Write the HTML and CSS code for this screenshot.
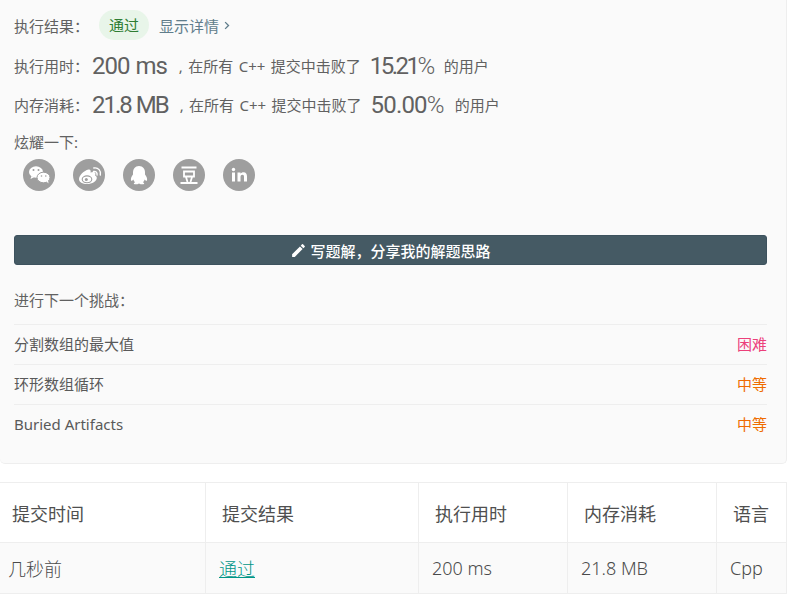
FILE: index.html
```html
<!DOCTYPE html>
<html lang="zh">
<head>
<meta charset="utf-8">
<title>提交结果</title>
<link rel="stylesheet" href="styles.css">
</head>
<body>
<section class="card">
  <div class="row result-row">
    <span class="label">执行结果：</span>
    <span class="pill">通过</span>
    <a class="details">显示详情<svg class="chev" viewBox="0 0 8 12" width="6" height="9"><path d="M1.500 1.500 6 6l-4.500 4.500" fill="none" stroke="currentColor" stroke-width="1.800"/></svg></a>
  </div>
  <div class="row stat-row">
    <span class="label">执行用时：</span><span class="big">200 ms</span>
    <span class="note note-a">, 在所有 C++ 提交中击败了</span>
    <span class="big pct pct-tight">15.21<span class="thin">%</span></span>
    <span class="note tail">的用户</span>
  </div>
  <div class="row stat-row">
    <span class="label">内存消耗：</span><span class="big big-tight">21.8 MB</span>
    <span class="note note-a">, 在所有 C++ 提交中击败了</span>
    <span class="big pct">50.00<span class="thin">%</span></span>
    <span class="note tail">的用户</span>
  </div>
  <div class="share-title">炫耀一下:</div>
  <div class="share">
    <span class="circle"><svg viewBox="0 0 32 32" width="32" height="32"><ellipse cx="13" cy="13" rx="7" ry="5.800" fill="#fff"/><path d="M8.500 17l-1 3 3.500-1.800z" fill="#fff"/><ellipse cx="20.500" cy="18.500" rx="6.500" ry="5.300" fill="#fff" stroke="#9e9e9e" stroke-width="1"/><path d="M23.500 22.500l2 2-.5-3.500z" fill="#fff"/><circle cx="10.500" cy="11" r="1" fill="#9e9e9e"/><circle cx="15.500" cy="11" r="1" fill="#9e9e9e"/><circle cx="18.500" cy="17" r=".8" fill="#9e9e9e"/><circle cx="22.800" cy="17" r=".8" fill="#9e9e9e"/></svg></span>
    <span class="circle"><svg viewBox="0 0 32 32" width="32" height="32"><path d="M6 20c0-3.500 5-8.500 9.500-9.500 2-.4 2.500 1.200 2 3 2.500-1 5-.8 5 1.300 0 .8-.4 1.200-.4 1.600 1 .4 1.700 1.200 1.700 2.500 0 3-4.500 6.100-9.800 6.100C9.500 25 6 23.500 6 20z" fill="#fff"/><ellipse cx="14" cy="20.300" rx="4.800" ry="3.400" fill="none" stroke="#9e9e9e" stroke-width="1.100"/><circle cx="13.300" cy="20.500" r="1.500" fill="#9e9e9e"/><path d="M20.500 12.500c2.500-.5 4 1.300 3.500 3.500M20.800 9c4.500-.8 7.500 2.800 6.500 7" fill="none" stroke="#fff" stroke-width="1.400" stroke-linecap="round"/></svg></span>
    <span class="circle"><svg viewBox="0 0 32 32" width="32" height="32"><path d="M16 7c-4 0-6 3-6 6.500v2c-1.500 2-2.500 4-2 6 .5.800 1.500 0 2.300-1 .3 1.200 1 2 1.700 2.700-1 .5-1.500 1.300-1 1.800 1 .6 3.500.5 5-.5 1.500 1 4 1.100 5 .5.500-.5 0-1.300-1-1.800.7-.7 1.400-1.500 1.700-2.700.8 1 1.800 1.800 2.300 1 .5-2-.5-4-2-6v-2C22 10 20 7 16 7z" fill="#fff"/></svg></span>
    <span class="circle"><svg viewBox="0 0 32 32" width="32" height="32"><path d="M8.500 8.500h15M11 12.500h10v5H11zM13 18l1.500 5M19 18l-1.500 5M7.500 24h17" fill="none" stroke="#fff" stroke-width="1.800"/></svg></span>
    <span class="circle"><svg viewBox="0 0 32 32" width="32" height="32"><rect x="9" y="13.500" width="3" height="9" fill="#fff"/><circle cx="10.500" cy="10.500" r="1.700" fill="#fff"/><path d="M14.500 13.500h3v1.300c.7-1 1.800-1.500 3-1.500 2.500 0 3.500 1.600 3.500 4.200v5h-3v-4.600c0-1.300-.4-2.100-1.500-2.100-1.200 0-2 .8-2 2.200v4.500h-3z" fill="#fff"/></svg></span>
  </div>
  <button class="solve"><svg viewBox="0 0 24 24" width="17" height="17"><path d="M3 17.250V21h3.750L17.810 9.940l-3.750-3.750L3 17.250zM20.710 7.040a1 1 0 0 0 0-1.410l-2.340-2.340a1 1 0 0 0-1.410 0l-1.830 1.830 3.750 3.750 1.830-1.830z" fill="#fff"/></svg>写题解，分享我的解题思路</button>
  <div class="next-title">进行下一个挑战：</div>
  <ul class="next">
    <li><span>分割数组的最大值</span><span class="hard">困难</span></li>
    <li><span>环形数组循环</span><span class="medium">中等</span></li>
    <li><span>Buried Artifacts</span><span class="medium">中等</span></li>
  </ul>
</section>
<table class="subs">
  <colgroup><col class="c1"><col class="c2"><col class="c3"><col class="c4"><col class="c5"></colgroup>
  <thead><tr><th>提交时间</th><th>提交结果</th><th>执行用时</th><th>内存消耗</th><th>语言</th></tr></thead>
  <tbody><tr><td>几秒前</td><td><a class="ok">通过</a></td><td>200 ms</td><td>21.8 MB</td><td>Cpp</td></tr></tbody>
</table>
</body>
</html>
```
FILE: styles.css
```css
* { box-sizing: border-box; }
html, body { margin: 0; padding: 0; background: #fff; }
body {
  font-family: "Noto Sans", "Noto Sans CJK SC", sans-serif;
  color: #616161;
  font-size: 15px;
  height: 605px;
  overflow: hidden;
}
.card {
  width: 787px;
  height: 464px;
  padding: 10px 20px 0 14px;
  background: #fafafa;
  border: solid #eeeeee;
  border-width: 0 1px 1px 0;
  border-radius: 0 0 5px 5px;
}
.row { display: flex; align-items: center; }
.result-row { height: 30px; }
.stat-row { height: 39px; }
.stat-row:nth-child(2) { margin-top: 6px; }
.label { font-size: 15px; white-space: pre; }
.result-row .label { width: 85px; }
.stat-row .label { width: 78px; }
.pill {
  width: 50px;
  height: 30px;
  line-height: 30px;
  border-radius: 15px;
  background: #e8f5e9;
  color: #2e7d32;
  font-size: 15px;
  text-align: center;
}
.details { margin-left: 10px; color: #607d8b; font-size: 15px; display: flex; align-items: center; gap: 5px; }
.big { font-family: Roboto, sans-serif; font-size: 24px; font-weight: 400; color: #616161; letter-spacing: -1px; word-spacing: 1px; white-space: pre; }
.big-tight { letter-spacing: -2px; }
.thin { font-weight: 300; }
.note { font-size: 15px; white-space: pre; word-spacing: 1.500px; }
.note-a { margin-left: 12px; }
.pct { margin-left: 9px; letter-spacing: -.8px; }
.pct-tight { letter-spacing: -2.500px; }
.tail { margin-left: 11px; }
.share-title { margin-top: 8px; font-size: 15px; line-height: 20px; }
.share { display: flex; gap: 18px; margin: 7px 0 0 9px; }
.circle { width: 32px; height: 32px; border-radius: 50%; background: #9e9e9e; display: block; }
.circle svg { display: block; }
.solve {
  display: flex;
  align-items: center;
  justify-content: center;
  gap: 3px;
  width: 753px;
  height: 30px;
  margin-top: 44px;
  padding: 0;
  border: 1px solid #3d525e;
  border-radius: 3px;
  background: #455a64;
  color: #fff;
  font: 500 15px "Noto Sans", "Noto Sans CJK SC", sans-serif;
}
.next-title { margin-top: 25px; height: 34px; font-size: 15px; line-height: 20px; }
.next { list-style: none; margin: 0; padding: 0; width: 753px; }
.next li {
  display: flex;
  justify-content: space-between;
  align-items: center;
  height: 40px;
  padding-bottom: 2px;
  border-top: 1px solid #eeeeee;
  font-size: 15px;
  color: #595959;
}
.hard { color: #ec407a; }
.medium { color: #ef6c00; }
.subs {
  table-layout: fixed;
  width: 786px;
  margin-top: 18px;
  border-collapse: collapse;
  color: #4f4f4f;
  font-size: 18px;
}
.c1 { width: 205.500px; }
.c2 { width: 213px; }
.c3 { width: 149px; }
.c4 { width: 149px; }
.c5 { width: 69.500px; }
.subs th, .subs td { border: 1px solid #eeeeee; font-weight: 400; text-align: left; }
.subs th:first-child, .subs td:first-child { border-left: 0; }
.subs th { height: 60px; padding: 0 16px; }
.subs th:first-child { padding-left: 12px; }
.subs td { height: 51px; padding: 0 13px; background: #fafafa; font-weight: 300; color: #4a4a4a; }
.subs td:first-child { padding-left: 8px; }
.ok { color: #009688; text-decoration: underline; }
```
